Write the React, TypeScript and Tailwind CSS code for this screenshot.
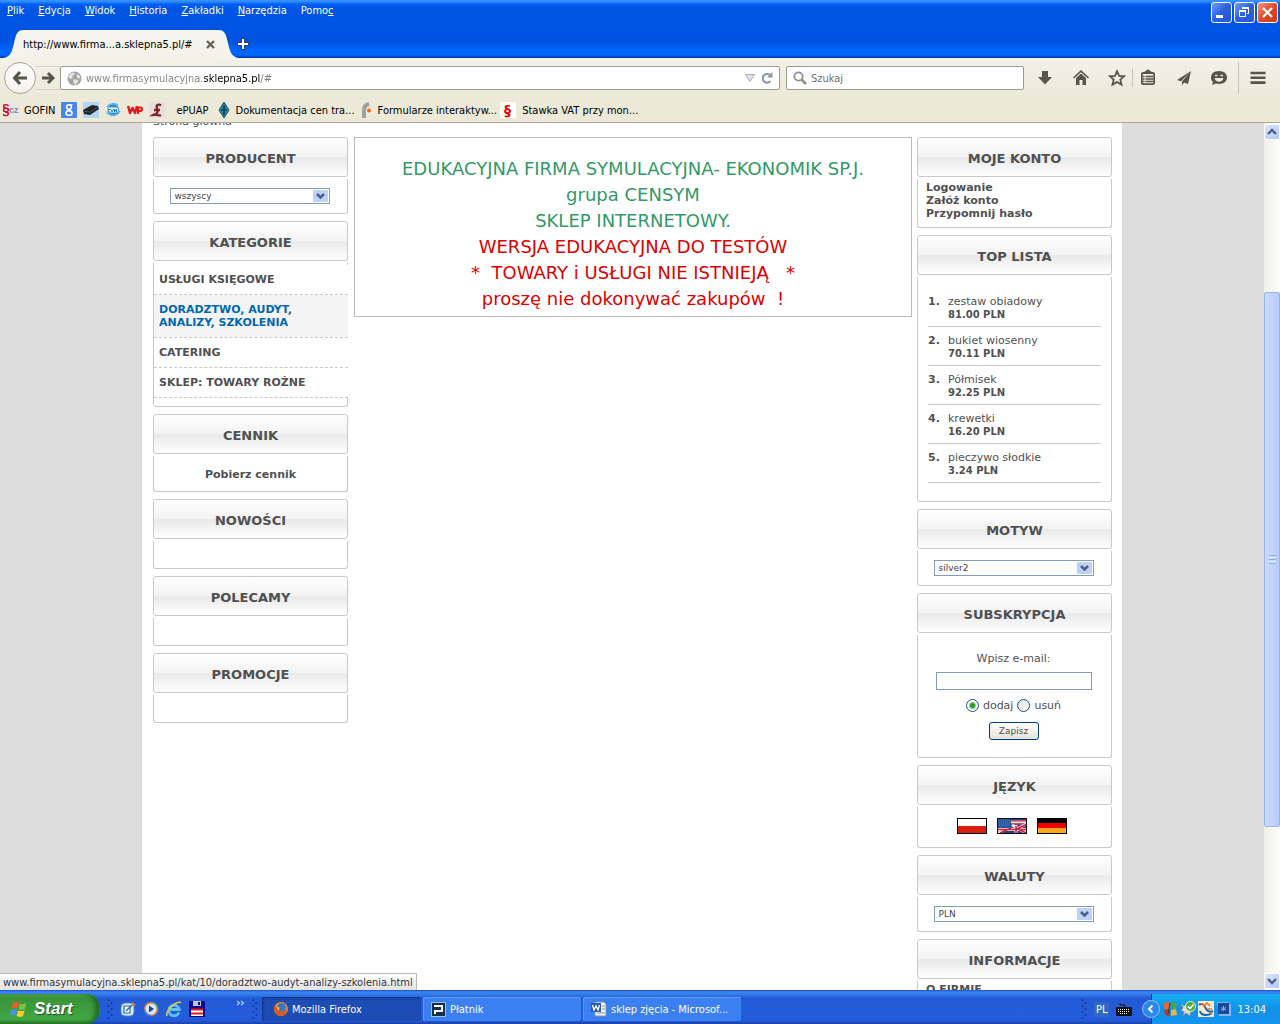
import type { ReactNode } from 'react';

const menuItems = [
  { before: '', key: 'P', after: 'lik' },
  { before: '', key: 'E', after: 'dycja' },
  { before: '', key: 'W', after: 'idok' },
  { before: '', key: 'H', after: 'istoria' },
  { before: '', key: 'Z', after: 'akładki' },
  { before: '', key: 'N', after: 'arzędzia' },
  { before: 'Pomo', key: 'c', after: '' },
];

const topList = [
  { name: 'zestaw obiadowy', price: '81.00 PLN' },
  { name: 'bukiet wiosenny', price: '70.11 PLN' },
  { name: 'Półmisek', price: '92.25 PLN' },
  { name: 'krewetki', price: '16.20 PLN' },
  { name: 'pieczywo słodkie', price: '3.24 PLN' },
];

const categories = [
  { name: 'USŁUGI KSIĘGOWE', active: false },
  { name: 'DORADZTWO, AUDYT, ANALIZY, SZKOLENIA', active: true },
  { name: 'CATERING', active: false },
  { name: 'SKLEP: TOWARY ROŻNE', active: false },
];

function TitleBar() {
  return (
    <header className="flex h-[58px] shrink-0 flex-col bg-[linear-gradient(180deg,#3c96ff_0px,#2a86ff_2px,#0062f5_4px,#0055e5_8px,#0053e1_42px,#0066ff_50px,#0066ff_55px,#0046c8_57px,#00339a_58px)] text-white">
      <div className="flex h-[30px] items-start justify-between pr-0.5 pl-[7px]">
        <nav className="flex gap-3.5 pt-1">
          {menuItems.map((item) => (
            <button key={item.key} type="button" className="leading-[13px]">
              {item.before}
              <span className="underline">{item.key}</span>
              {item.after}
            </button>
          ))}
        </nav>
        <div className="flex gap-0.5 pt-0.5">
          <button type="button" aria-label="Minimalizuj" className="size-[21px] rounded-[3px] border border-white bg-linear-to-br from-[#6f9bf5] via-[#2a5fe0] to-[#2458d8]">
            <svg viewBox="0 0 19 19" className="size-[19px]">
              <path d="M4 12h7v3H4z" fill="#fff" />
            </svg>
          </button>
          <button type="button" aria-label="Przywróć" className="size-[21px] rounded-[3px] border border-white bg-linear-to-br from-[#6f9bf5] via-[#2a5fe0] to-[#2458d8]">
            <svg viewBox="0 0 19 19" className="size-[19px]" fill="none" stroke="#fff">
              <path d="M4.5 8.5h6v5h-6z" />
              <path d="M4 8h7" strokeWidth="2" />
              <path d="M7.5 6V5.5h6v5H12" />
              <path d="M7 5h7" strokeWidth="2" />
            </svg>
          </button>
          <button type="button" aria-label="Zamknij" className="size-[21px] rounded-[3px] border border-white bg-linear-to-br from-[#f0937a] via-[#e0492a] to-[#d03c14]">
            <svg viewBox="0 0 19 19" className="size-[19px]">
              <path d="M5 5l9 9M14 5l-9 9" stroke="#fff" strokeWidth="2.2" />
            </svg>
          </button>
        </div>
      </div>
      <div className="flex h-7 items-stretch pl-[3px]">
        <svg viewBox="0 0 20 28" className="h-7 w-5">
          <path d="M0 28C8 27 9 21 11 13C13 5 14 0 20 0V28z" fill="#f4f3ed" />
        </svg>
        <div className="flex w-[196px] items-center justify-between bg-linear-to-b from-[#f6f5f1] to-[#f3f1e9] pr-1 text-black">
          <span>http://www.firma...a.sklepna5.pl/#</span>
          <button type="button" aria-label="Zamknij kartę">
            <svg viewBox="0 0 9 9" className="size-[9px]">
              <path d="M1 1l7 7M8 1l-7 7" stroke="#6b6452" strokeWidth="2.4" />
            </svg>
          </button>
        </div>
        <svg viewBox="0 0 20 28" className="h-7 w-5">
          <path d="M20 28C12 27 11 21 9 13C7 5 6 0 0 0V28z" fill="#f4f3ed" />
        </svg>
        <button type="button" aria-label="Nowa karta" className="-ml-0.5">
          <svg viewBox="0 0 12 12" className="size-3">
            <path d="M4 0h4v4h4v4H8v4H4V8H0V4h4z" fill="#2b3e66" />
            <path d="M6 1v10M1 6h10" stroke="#fff" strokeWidth="2" />
          </svg>
        </button>
      </div>
    </header>
  );
}

function ToolButton({ label, children }: { label: string; children: ReactNode }) {
  return (
    <button type="button" aria-label={label} className="flex size-[18px] items-center justify-center">
      <svg viewBox="0 0 18 18" className="size-[18px]" fill="none" stroke="#56554a" strokeWidth="2">
        {children}
      </svg>
    </button>
  );
}

function NavBar() {
  return (
    <div className="flex h-10 shrink-0 items-center bg-linear-to-b from-[#f3f1e9] to-[#ece9d8] pl-1">
      <button type="button" aria-label="Wstecz" className="flex size-8 shrink-0 items-center justify-center rounded-full border border-[#a5a294] bg-linear-to-b from-white to-[#f4f2ea]">
        <svg viewBox="0 0 16 16" className="size-4" fill="none" stroke="#56554a" strokeWidth="3">
          <path d="M8 2L2.500 8L8 14M3 8h12" />
        </svg>
      </button>
      <button type="button" aria-label="Dalej" className="flex h-6 w-6 shrink-0 items-center justify-center border-y border-[#d8d5c6]">
        <svg viewBox="0 0 14 14" className="size-3.5" fill="none" stroke="#56554a" strokeWidth="3">
          <path d="M7 2l5 5l-5 5M12 7H1" />
        </svg>
      </button>
      <div className="flex h-6 min-w-0 flex-1 items-center gap-1 rounded-xs border border-[#9d9b8d] bg-white px-1.5">
        <svg viewBox="0 0 15 15" className="size-[15px] shrink-0">
          <circle cx="7.500" cy="7.500" r="7" fill="#a3a3a3" />
          <path d="M2 4l3-2.500l3 .5l-1 2l-2 1l1 2l-2 1l-3-2zM7 8l4 1v2l-3 3l-2-3zM10 3l3 2l.5 3l-3-1l-1-2z" fill="#e3e3e3" />
        </svg>
        <input
          aria-label="Adres"
          defaultValue="www.firmasymulacyjna.sklepna5.pl/#"
          className="min-w-0 flex-1 bg-[linear-gradient(90deg,#808080_117px,#000_117px,#000_174px,#808080_174px)] bg-clip-text text-transparent outline-none"
        />
        <svg viewBox="0 0 10 8" className="h-2 w-2.5">
          <path d="M.5 .5h9L5 7.500z" fill="#dfe2e6" stroke="#a9afb6" />
        </svg>
        <button type="button" aria-label="Odśwież" className="ml-0.5">
          <svg viewBox="0 0 12 12" className="size-3">
            <path d="M9.500 9.200A4.400 4.400 0 1 1 9 3" fill="none" stroke="#8795a5" strokeWidth="2" />
            <path d="M11.500 0v5.500H6z" fill="#8795a5" />
          </svg>
        </button>
      </div>
      <div className="ml-1.5 flex h-6 w-[238px] shrink-0 items-center gap-1 rounded-xs border border-[#9d9b8d] bg-white px-1.5">
        <svg viewBox="0 0 14 14" className="size-3.5" fill="none" stroke="#8f8f8f">
          <circle cx="5.500" cy="5.500" r="4.200" strokeWidth="1.800" />
          <path d="M8.500 8.500l4.500 4.500" strokeWidth="2.600" />
        </svg>
        <input aria-label="Szukaj" placeholder="Szukaj" className="min-w-0 flex-1 outline-none placeholder:text-[#6e6e6e]" />
      </div>
      <div className="flex shrink-0 items-center pr-[13px] pl-3">
        <ToolButton label="Pobrane pliki">
          <path d="M6 2h6v6h4l-7 7.500L2 8h4z" fill="#56554a" stroke="none" />
        </ToolButton>
        <div className="w-[18px]" />
        <ToolButton label="Strona startowa">
          <path d="M1.500 9L9 2.200L16.500 9" strokeWidth="1.600" />
          <path d="M4 9l5-4.500L14 9v7h-3.500v-5h-3v5H4z" fill="#56554a" stroke="none" />
        </ToolButton>
        <div className="w-[18px]" />
        <ToolButton label="Dodaj zakładkę">
          <path d="M9 2.200l2.100 4.600l5 .5l-3.800 3.300l1.200 5L9 13l-4.500 2.600l1.200-5L2 7.300l5-.5z" strokeWidth="1.800" />
        </ToolButton>
        <div className="mx-1.5 h-[18px] w-px bg-[#c2c2bd]" />
        <ToolButton label="Zakładki">
          <rect x="2.900" y="4" width="12.200" height="11.200" rx="1.200" strokeWidth="1.800" />
          <path d="M6 3.500L9 1.500l3 2" />
          <path d="M6.500 7.500H14M6.500 10h7.500M6.500 12.500H14M4 7.500h1.500M4 10h1.500M4 12.500h1.500" strokeWidth="1.300" />
        </ToolButton>
        <div className="w-[18px]" />
        <ToolButton label="Udostępnij">
          <path d="M16 2L2 11l4 1.200zM16 2L7 12.500v4l2-3l4 1.500z" fill="#56554a" stroke="none" />
        </ToolButton>
        <div className="w-[17px]" />
        <ToolButton label="Rozmowa">
          <path d="M9 2c5 0 8 2.800 8 6.500S14 15 9 15c-1 0-2-.1-3-.4L2 16l1-3C1.600 11.800 1 10.200 1 8.500C1 4.800 4 2 9 2z" fill="#56554a" stroke="none" />
          <path d="M4.500 9h9c-.5 2.500-2.500 3.700-4.500 3.700S5 11.500 4.500 9z" fill="#ece9d8" stroke="none" />
          <path d="M5 6.500h2.500M10.500 6.500H13" stroke="#ece9d8" strokeWidth="1.500" />
        </ToolButton>
        <div className="mx-2.5 h-8 w-px bg-[#c2c2bd]" />
        <ToolButton label="Menu">
          <path d="M1.500 4h15M1.500 8.800h15M1.500 13.600h15" strokeWidth="2.600" />
        </ToolButton>
      </div>
    </div>
  );
}

function BookmarksBar() {
  return (
    <nav aria-label="Pasek zakładek" className="flex h-[25px] shrink-0 items-center gap-1.5 overflow-hidden border-b border-[#aca899] bg-[#ece9d8] pl-[3px] whitespace-nowrap text-black">
      <a href="#gofin" className="flex items-center gap-[5px]">
        <svg viewBox="0 0 16 16" className="size-4">
          <rect width="16" height="16" fill="#e8e8e8" />
          <text x="-1" y="12" fontSize="14" fontWeight="700" fill="#e00000" fontFamily="Liberation Sans">§</text>
          <text x="6" y="11" fontSize="9" fontWeight="700" fill="#8b8b8b" fontFamily="Liberation Sans">cz</text>
        </svg>
        GOFIN
      </a>
      <a href="#google" aria-label="Google">
        <svg viewBox="0 0 16 16" className="size-4">
          <rect width="16" height="16" rx="1" fill="#4787ed" />
          <ellipse cx="8" cy="5" rx="2.400" ry="2.300" fill="none" stroke="#fff" strokeWidth="1.600" />
          <ellipse cx="8" cy="11" rx="3" ry="2.300" fill="none" stroke="#fff" strokeWidth="1.600" />
          <path d="M9 2.800h2.500M7 7.500l2 1.500" fill="none" stroke="#fff" strokeWidth="1.300" />
        </svg>
      </a>
      <a href="#usb" aria-label="Urządzenia">
        <svg viewBox="0 0 16 16" className="size-4">
          <rect width="16" height="16" fill="#b5d5ee" />
          <path d="M0 8l9-5l6 1l1 3l-9 6l-6-1z" fill="#22262c" />
          <path d="M1 9l6 1l8-5" stroke="#4a525c" fill="none" />
        </svg>
      </a>
      <a href="#tvn" aria-label="TVN24">
        <svg viewBox="0 0 16 16" className="size-4">
          <circle cx="8" cy="8" r="6" fill="#2a8fd4" />
          <path d="M1 9c3 5 11 6 14 0M2 5c3-4 8-4 11-2" fill="none" stroke="#5fb4ea" strokeWidth="1.500" />
          <rect x="1" y="5.500" width="12" height="5" rx="2" fill="#fff" />
          <path d="M3 6v4h2M3 7.500h2M5.500 7L7 10l1.500-3M9.500 10V7l2 3V7" fill="none" stroke="#1c7cc2" />
        </svg>
      </a>
      <a href="#wp" aria-label="WP">
        <svg viewBox="0 0 16 16" className="size-4" fill="none" stroke="#e8141c" strokeWidth="2.400">
          <path d="M1 4l2 7l2.500-5L8 11l2-7" strokeLinejoin="round" />
          <path d="M11 12V5.500h2.500c2 0 2 3.500 0 3.500H11" strokeWidth="2" />
        </svg>
      </a>
      <a href="#epuap" className="flex items-center gap-[11px]">
        <svg viewBox="0 0 16 16" className="size-4">
          <rect width="16" height="16" fill="#e4e0dc" />
          <path d="M12 3.500c-3-2-5 0-4 2.500l.5 3c0 2-1.500 4-4.500 4c2-1.500 5 1.500 8 0M5 8h6" fill="none" stroke="#8c2024" strokeWidth="2.400" />
        </svg>
        ePUAP
      </a>
      <div className="flex gap-[3px] pl-px">
        <a href="#dokumentacja" className="flex items-center gap-1">
          <svg viewBox="0 0 16 16" className="size-4">
            <path d="M8 0l5 8l-5 8l-5-8z" fill="#2488a8" stroke="#29505c" />
            <path d="M8 3v10M5 8h6" stroke="#0d4a64" strokeWidth="2" />
          </svg>
          Dokumentacja cen tra...
        </a>
        <a href="#formularze" className="flex items-center gap-1">
          <svg viewBox="0 0 16 16" className="size-4">
            <path d="M6 16V8c0-3 1-5 5-6" fill="none" stroke="#9ba3a5" strokeWidth="4" />
            <circle cx="11" cy="8.500" r="2" fill="#ee6a1c" />
          </svg>
          Formularze interaktyw...
        </a>
        <a href="#vat" className="flex items-center gap-1.5">
          <svg viewBox="0 0 16 16" className="size-4">
            <rect width="16" height="16" rx="1" fill="#fff" />
            <text x="4" y="13" fontSize="14" fontWeight="700" fill="#e80000" fontFamily="DejaVu Sans">§</text>
          </svg>
          Stawka VAT przy mon...
        </a>
      </div>
    </nav>
  );
}

function Panel({ title, children }: { title: string; children?: ReactNode }) {
  return (
    <section className="flex flex-col gap-0.5">
      <h2 className="flex h-10 items-center justify-center rounded-[3px] border border-[#c8c8c8] bg-[linear-gradient(180deg,#ffffff_0%,#f3f3f3_49%,#e9e9e9_52%,#ffffff_100%)] pt-[3px] text-[13px] leading-4 font-bold">
        {title}
      </h2>
      <div className="min-h-7 rounded-b-[3px] border border-t-0 border-[#c8c8c8]">{children}</div>
    </section>
  );
}

function PanelSelect({ label, value }: { label: string; value: string }) {
  return (
    <div className="flex h-[34px] justify-center pt-[9px] pr-0.5">
      <div className="relative h-4 w-40">
        <select aria-label={label} className="h-4 w-full appearance-none border border-[#7f9db9] bg-white pl-1 text-[9px] leading-3 text-[#444]">
          <option>{value}</option>
        </select>
        <svg viewBox="0 0 15 12" className="pointer-events-none absolute top-0.5 right-0.5 h-3 w-[15px]">
          <rect width="15" height="12" rx="1" fill="#bfd0fb" />
          <path d="M4 4l3.500 3.500L11 4" fill="none" stroke="#4d6185" strokeWidth="2.600" />
        </svg>
      </div>
    </div>
  );
}

function LeftColumn() {
  return (
    <aside className="flex w-[195px] shrink-0 flex-col gap-[7px]">
      <Panel title="PRODUCENT">
        <PanelSelect label="Producent" value="wszyscy" />
      </Panel>
      <Panel title="KATEGORIE">
        <ul className="-mr-px mb-2 pt-0.5 font-bold">
          {categories.map((category) => (
            <li key={category.name} className="border-b border-dashed border-[#c8c8c8] bg-white">
              <a
                href="#kategoria"
                className={
                  category.active
                    ? 'block bg-[#f4f4f4] py-2 pr-8 pl-[5px] text-[#0068b0]'
                    : 'block py-2 pl-[5px]'
                }
              >
                {category.name}
              </a>
            </li>
          ))}
        </ul>
      </Panel>
      <Panel title="CENNIK">
        <div className="pt-3 pb-[10px] text-center font-bold">
          <a href="#cennik">Pobierz cennik</a>
        </div>
      </Panel>
      <Panel title="NOWOŚCI" />
      <Panel title="POLECAMY" />
      <Panel title="PROMOCJE" />
    </aside>
  );
}

function Flags() {
  return (
    <div className="flex justify-center gap-2.5 pt-[11px] pr-1.5 pb-[13px]">
      <a href="#pl" aria-label="Polski">
        <svg viewBox="0 0 30 16" className="h-4 w-[30px]">
          <rect width="30" height="16" fill="#000" />
          <path d="M1 1h28v7H1z" fill="#fff" />
          <path d="M1 8h28v7H1z" fill="#d8200f" />
        </svg>
      </a>
      <a href="#en" aria-label="English">
        <svg viewBox="0 0 30 16" className="h-4 w-[30px]">
          <rect width="30" height="16" fill="#2a3c82" />
          <path d="M13 2h16v1.500H13zM13 5h16v1.500H13z" fill="#d5495c" />
          <path d="M13 3.500h16V5H13z" fill="#e8e4ea" />
          <path d="M1 11.500h28M19 7v9M1 15l13-6M15 7l14 8M29 6l-9 5" stroke="#e8e4ea" strokeWidth="3" />
          <path d="M1 11.500h28M19 8v8M3 15l11-5M19 10l10 5M29 6.500l-9 4.500" stroke="#cc2338" strokeWidth="1.500" />
          <path d="M1 1h13v9H1z" fill="#28579e" />
          <path d="M2 3h11M2 5h11M2 7h11" stroke="#4f7ab8" strokeDasharray="1 1" />
          <rect x=".5" y=".5" width="29" height="15" fill="none" stroke="#111" />
        </svg>
      </a>
      <a href="#de" aria-label="Deutsch">
        <svg viewBox="0 0 30 16" className="h-4 w-[30px]">
          <rect width="30" height="16" fill="#000" />
          <path d="M1 5h28v5H1z" fill="#f00000" />
          <path d="M1 10h28v5H1z" fill="#fba81c" />
        </svg>
      </a>
    </div>
  );
}

function RightColumn() {
  return (
    <aside className="flex w-[195px] shrink-0 flex-col gap-[7px]">
      <Panel title="MOJE KONTO">
        <ul className="pt-0.5 pb-[7px] pl-2 font-bold">
          <li><a href="#logowanie">Logowanie</a></li>
          <li><a href="#konto">Załóż konto</a></li>
          <li><a href="#haslo">Przypomnij hasło</a></li>
        </ul>
      </Panel>
      <Panel title="TOP LISTA">
        <ol className="px-2.5 pt-[11px] pb-[18px]">
          {topList.map((item, index) => (
            <li key={item.name} className="flex border-b border-[#c8c8c8] pt-[7px] pb-[5px]">
              <span className="w-5 font-bold">{index + 1}.</span>
              <div>
                <a href="#produkt" className="block">{item.name}</a>
                <p className="pt-px text-[10px] leading-3 font-bold">{item.price}</p>
              </div>
            </li>
          ))}
        </ol>
      </Panel>
      <Panel title="MOTYW">
        <PanelSelect label="Motyw" value="silver2" />
      </Panel>
      <Panel title="SUBSKRYPCJA">
        <form className="flex flex-col items-center pt-[17px] pr-0.5 pb-[17px]">
          <label htmlFor="email">Wpisz e-mail:</label>
          <input id="email" type="text" className="mt-[7px] h-[18px] w-[156px] border border-[#7f9db9] bg-white px-1" />
          <div className="mt-2 flex items-center gap-1">
            <input
              id="add"
              type="radio"
              name="mode"
              defaultChecked
              className="size-[13px] appearance-none rounded-full border border-[#1c5180] bg-white checked:bg-[radial-gradient(circle,#21a121_0px,#21a121_2px,#ffffff_4px)]"
            />
            <label htmlFor="add" className="pt-px">dodaj</label>
            <input
              id="remove"
              type="radio"
              name="mode"
              className="size-[13px] appearance-none rounded-full border border-[#1c5180] bg-linear-to-br from-[#dcdcd7] to-white checked:bg-[#21a121]"
            />
            <label htmlFor="remove" className="pt-px">usuń</label>
          </div>
          <button type="button" className="mt-2.5 h-[18px] w-[50px] rounded-[3px] border border-[#003c74] bg-linear-to-b from-white to-[#e6e3d8] text-[9px] leading-3">
            Zapisz
          </button>
        </form>
      </Panel>
      <Panel title="JĘZYK">
        <Flags />
      </Panel>
      <Panel title="WALUTY">
        <PanelSelect label="Waluta" value="PLN" />
      </Panel>
      <Panel title="INFORMACJE">
        <ul className="pt-0.5 pb-2 pl-2 font-bold">
          <li><a href="#firma">O FIRMIE</a></li>
        </ul>
      </Panel>
    </aside>
  );
}

function ScrollBar() {
  return (
    <div className="flex w-4 shrink-0 flex-col bg-linear-to-r from-[#f0efe8] to-[#fefefb] py-px">
      <button type="button" aria-label="W górę" className="h-4 rounded-xs border border-white bg-linear-to-br from-[#dbe5fd] to-[#b5c8f8]">
        <svg viewBox="0 0 14 14" className="size-3.5">
          <path d="M3 9l4-4l4 4" fill="none" stroke="#4d6185" strokeWidth="2.400" />
        </svg>
      </button>
      <div className="grow-[152] basis-0" />
      <div className="flex grow-[535] basis-0 flex-col items-center justify-center gap-px rounded-xs border border-[#98b3ee] bg-linear-to-r from-[#cbdafd] to-[#b8cbfa]">
        <span className="h-px w-[7px] bg-[#8cb0f8]" />
        <span className="h-px w-[7px] bg-[#eef4fe]" />
        <span className="h-px w-[7px] bg-[#8cb0f8]" />
        <span className="h-px w-[7px] bg-[#eef4fe]" />
        <span className="h-px w-[7px] bg-[#8cb0f8]" />
      </div>
      <div className="grow-[146] basis-0" />
      <button type="button" aria-label="W dół" className="h-4 rounded-xs border border-white bg-linear-to-br from-[#dbe5fd] to-[#b5c8f8]">
        <svg viewBox="0 0 14 14" className="size-3.5">
          <path d="M3 5l4 4l4-4" fill="none" stroke="#4d6185" strokeWidth="2.400" />
        </svg>
      </button>
    </div>
  );
}

function Grip() {
  return (
    <svg viewBox="0 0 6 22" className="h-[22px] w-1.5 shrink-0">
      <path d="M1.500 1v20" stroke="#1a3f9e" strokeWidth="2" strokeDasharray="2 4" />
      <path d="M4.500 4v17" stroke="#1a3f9e" strokeWidth="2" strokeDasharray="2 4" />
    </svg>
  );
}

function TaskBar() {
  return (
    <footer className="flex h-[34px] shrink-0 items-stretch bg-[linear-gradient(180deg,#1f4fc0_0px,#3a86f2_2px,#3078e8_5px,#2359d4_8px,#245ddc_26px,#2359d6_31px,#1941a5_34px)] text-white">
      <button
        type="button"
        className="mt-1 flex w-[99px] shrink-0 items-center gap-1 rounded-r-xl bg-[linear-gradient(180deg,#5fb05f_0%,#3a943a_14%,#3f9f3f_60%,#43a843_85%,#2a7a2a_100%)] pl-2.5 font-[family-name:'Liberation_Sans',sans-serif] text-[17px] leading-5 font-bold text-white italic shadow-[inset_-4px_0_5px_#1d6a1d] [text-shadow:1px_1px_1px_#1f4f1f]"
      >
        <svg viewBox="0 0 20 18" className="h-[18px] w-5">
          <path d="M3 3c2-1.500 4-1.500 6-.3L7.500 8.500C5.500 7.300 3.500 7.300 1.500 8.800z" fill="#ee5a28" />
          <path d="M10 3.300c2 1 4 1 6.500-.3L15 8.800c-2.200 1.300-4.300 1.200-6.500 0z" fill="#7cc242" />
          <path d="M1.200 10c2-1.400 4-1.400 6-.2L5.700 15.500c-2-1.200-4-1-6 .2z" fill="#4a8ff0" />
          <path d="M8.200 10.200c2.200 1.200 4.200 1.200 6.400 0L13 16c-2.200 1.200-4.200 1.200-6.400-.1z" fill="#fbcb2c" />
        </svg>
        Start
      </button>
      <div className="flex shrink-0 items-center gap-[7px] pt-1 pl-2">
        <Grip />
        <button type="button" aria-label="Pulpit">
          <svg viewBox="0 0 16 16" className="size-4">
            <rect x="1" y="2" width="13" height="13" rx="4" fill="#dcebf8" stroke="#4a89c8" />
            <path d="M4 5h6v7H4z" fill="#fff" stroke="#2468a8" strokeWidth="1.200" />
            <path d="M6 10l6-6" fill="none" stroke="#2468a8" strokeWidth="1.500" />
            <path d="M11 3l2-2l3 3l-2 1z" fill="#e07b2c" />
          </svg>
        </button>
        <button type="button" aria-label="Odtwarzacz">
          <svg viewBox="0 0 16 16" className="size-4">
            <circle cx="8" cy="8" r="7" fill="#f08a24" />
            <path d="M8 1a7 7 0 0 1 7 7H8z" fill="#6ab648" />
            <path d="M8 15a7 7 0 0 1-7-7h7z" fill="#3a7ed8" />
            <circle cx="8" cy="8" r="5.500" fill="#dfe8f8" />
            <path d="M6 4.500l5 3.500l-5 3.500z" fill="#24409a" />
          </svg>
        </button>
        <button type="button" aria-label="Internet Explorer">
          <svg viewBox="0 0 16 16" className="size-4" fill="none">
            <path d="M13 11.500A5.300 5.300 0 1 1 13.300 8.500H4" stroke="#5cc4f4" strokeWidth="2.800" />
            <path d="M1 15C-1 11 9 0 15 1.500" stroke="#f4c434" strokeWidth="1.500" />
          </svg>
        </button>
        <button type="button" aria-label="Total Commander">
          <svg viewBox="0 0 16 16" className="size-4">
            <rect width="16" height="16" fill="#0c0c8c" />
            <path d="M4 0h8v5H4z" fill="#c4c4c4" />
            <path d="M9 1h2v3H9z" fill="#0c0c8c" />
            <path d="M2 8h12v7H2z" fill="#fff" />
            <path d="M2 8.500h12M2 12.500h12" stroke="#e01c1c" strokeWidth="2" />
          </svg>
        </button>
        <button type="button" aria-label="Więcej" className="mb-3 ml-6">
          <svg viewBox="0 0 9 6" className="h-1.5 w-[9px]" fill="none" stroke="#a8c8ff">
            <path d="M1 1l2.500 2L1 5M5 1l2.500 2L5 5" strokeWidth="1.300" />
          </svg>
        </button>
        <Grip />
      </div>
      <div className="flex min-w-0 flex-1 gap-0.5 pt-[7px] pb-[3px] pl-1">
        <button type="button" className="flex w-[159px] items-center gap-1 rounded-xs bg-[#1c4cb4] pl-3 shadow-[inset_1px_1px_2px_#0f3080]">
          <svg viewBox="0 0 14 14" className="size-3.5">
            <circle cx="7" cy="7" r="7" fill="#ee8420" />
            <circle cx="7.500" cy="5.500" r="4.300" fill="#3276c4" />
            <path d="M0 5c2-1 3 1 6 1c1 1-2 2-1 3c2 2 6 1 8-2c0 5-3 7-6 7S0 11 0 5z" fill="#e0561c" />
            <path d="M2 3c1 2 3 2 4 3l-2 3z" fill="#fbb030" />
          </svg>
          Mozilla Firefox
        </button>
        <button type="button" className="flex w-[158px] items-center gap-1 rounded-xs bg-[#3a80f3] pl-2 shadow-[inset_1px_1px_1px_#629cf8]">
          <svg viewBox="0 0 15 15" className="size-[15px]">
            <rect x=".5" y=".5" width="14" height="14" fill="#123049" stroke="#9cc0d4" />
            <path d="M4 12V9h7V4H3" fill="none" stroke="#fff" strokeWidth="2" />
          </svg>
          Płatnik
        </button>
        <button type="button" className="flex w-[158px] items-center gap-1 rounded-xs bg-[#3a80f3] pl-2 whitespace-nowrap shadow-[inset_1px_1px_1px_#629cf8]">
          <svg viewBox="0 0 16 16" className="size-4">
            <path d="M4 1h9l2 2v12H4z" fill="#f4f7fc" stroke="#7a8fb0" />
            <path d="M11 5h3M11 8h3M6 12h8" stroke="#7a8fb0" />
            <rect y="2" width="10" height="9" fill="#2a5aae" />
            <path d="M1.500 4l1.500 5l2-4l2 4l1.500-5" fill="none" stroke="#fff" strokeWidth="1.300" />
          </svg>
          sklep zjęcia - Microsof...
        </button>
      </div>
      <div className="flex shrink-0 items-center gap-[7px] pt-1 pr-[19px]">
        <Grip />
        <span className="bg-[#316ac5] px-0.5 py-px">PL</span>
        <svg viewBox="0 0 16 14" className="h-3.5 w-4">
          <path d="M4 1v2h5v2" fill="none" stroke="#111" />
          <rect y="5" width="16" height="9" rx="1" fill="#111" />
          <path d="M2 7.500h12M2 9.500h12M4 11.500h8" stroke="#fff" strokeDasharray="1 1" />
        </svg>
      </div>
      <div className="mt-1 flex shrink-0 items-center gap-0.5 border-l border-[#0a3a9c] bg-linear-to-b from-[#18b0f4] via-[#1290e8] to-[#1594ee] pr-3.5">
        <button type="button" aria-label="Pokaż ukryte ikony" className="-ml-2.5">
          <svg viewBox="0 0 18 18" className="size-[18px]">
            <circle cx="9" cy="9" r="8.500" fill="#2c86ee" stroke="#8cc4fa" />
            <path d="M10.500 5.500L7 9l3.500 3.500" fill="none" stroke="#fff" strokeWidth="2" />
          </svg>
        </button>
        <svg viewBox="0 0 16 16" className="size-4">
          <path d="M1 2l7-1v7L3 9z" fill="#e8692c" />
          <path d="M9 1l6 1l-1 6H9z" fill="#48a848" />
          <path d="M2 9l6-1v7l-5-1z" fill="#c8341c" />
          <path d="M9 9l5-1l1 6l-6 1z" fill="#e8b83c" />
          <path d="M8 2L6 13" stroke="#3a3a3a" />
        </svg>
        <svg viewBox="0 0 16 16" className="size-4">
          <path d="M1 3l3 2l3-3v6l4 2l-1 5l-4-3l-3 3l1-4l-3-2l2-2z" fill="#dcdcdc" stroke="#8a8a8a" />
          <circle cx="10.500" cy="5.500" r="5" fill="#4fae32" stroke="#e4f3dc" />
          <path d="M8 5.500l2 2l3.500-4" fill="none" stroke="#fff" strokeWidth="1.800" />
        </svg>
        <svg viewBox="0 0 16 16" className="size-4">
          <rect width="16" height="16" fill="#f4ead8" />
          <path d="M1 4c2-2 5-1 6 2s4 6 8 4M2 10c1 5 8 5 12 2" fill="none" stroke="#1f64b4" strokeWidth="2" />
          <path d="M3 2l3 3l3-3l3 3M9 8h5M11 12h3" fill="none" stroke="#ec7c1c" strokeWidth="1.600" />
        </svg>
        <svg viewBox="0 0 16 16" className="size-4">
          <path d="M1 1h11l3 3v11H3z" fill="#8fb4e4" />
          <rect x="2" y="2" width="11" height="11" fill="#174a98" />
          <path d="M7.500 5v5M5 6.500l5 2.500M10 6.500L5 9" stroke="#7cb4e8" />
        </svg>
        <span className="pl-[3px]">13:04</span>
      </div>
    </footer>
  );
}

export default function App() {
  return (
    <div className="flex h-screen flex-col overflow-hidden font-[family-name:'DejaVu_Sans_Condensed','DejaVu_Sans',sans-serif] text-[11px] leading-[13px]">
      <TitleBar />
      <NavBar />
      <BookmarksBar />
      <div className="relative flex min-h-0 flex-1 bg-[#dcdcdc]">
        <div className="flex min-w-0 flex-1 justify-center overflow-hidden font-[family-name:'DejaVu_Sans',sans-serif] text-[#505050]">
          {/* page is scrolled a little, so the breadcrumb is cut by the toolbar */}
          <div className="-mt-2 w-full max-w-[980px] self-start bg-white pr-2.5 pb-10 pl-[11px]">
            <p className="mb-[9px]">Strona główna</p>
            <div className="flex items-start">
              <LeftColumn />
              <main className="mr-[5px] ml-1.5 min-w-0 flex-1 border border-[#bbb] pt-[18px] pb-1 text-center text-[18px] leading-[26px] whitespace-pre-wrap text-[#339966]">
                <p>EDUKACYJNA FIRMA SYMULACYJNA- EKONOMIK SP.J.</p>
                <p>grupa CENSYM</p>
                <p>SKLEP INTERNETOWY.</p>
                <div className="text-[#dd0000]">
                  <p>WERSJA EDUKACYJNA DO TESTÓW</p>
                  <p>{'*  TOWARY i USŁUGI NIE ISTNIEJĄ   *'}</p>
                  <p>{'proszę nie dokonywać zakupów  !'}</p>
                </div>
              </main>
              <RightColumn />
            </div>
          </div>
        </div>
        <ScrollBar />
        <div className="absolute bottom-0 left-0 border-t border-r border-[#b8b8b8] bg-linear-to-b from-white to-[#e2e2e2] px-[3px] pt-0.5 pb-px text-[#333]">
          www.firmasymulacyjna.sklepna5.pl/kat/10/doradztwo-audyt-analizy-szkolenia.html
        </div>
      </div>
      <TaskBar />
    </div>
  );
}
